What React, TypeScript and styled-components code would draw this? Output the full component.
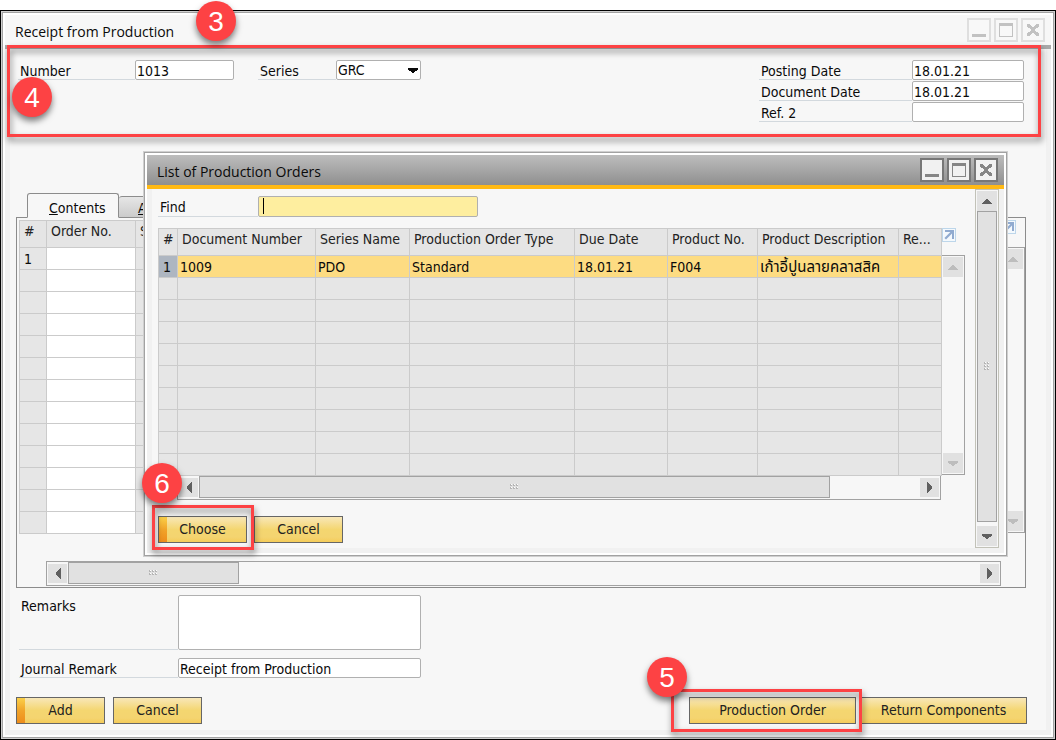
import React from "react";
import styled, { createGlobalStyle, css } from "styled-components";

const ui = `"DejaVu Sans Condensed", "Noto Sans", "Noto Sans Thai", sans-serif`;
const titleFont = `"Open Sans", "Noto Sans", sans-serif`;
const red = "#fd4244";

const GlobalStyle = createGlobalStyle`
  * { box-sizing: border-box; }
  body { margin: 0; background: #fff; font-family: ${ui}; font-size: 14px; line-height: 18px; color: #0a0a0a; }
  button, input, select, textarea { font: inherit; color: inherit; margin: 0; }
`;

/* ---------- windows ---------- */

const Screen = styled.div`
  position: relative;
  display: flex;
  flex-direction: column;
  min-height: 100vh;
  padding-top: 10px;
`;

const frame = css`
  display: flex;
  flex-direction: column;
  border: 1px solid #cfcfcf;
  box-shadow: inset 0 0 0 1px #a2a2a2;
  padding: 3px;
  background: #fff;
`;

const Edge = styled.div`
  flex: 1;
  display: flex;
  border: 1px solid #000;
`;

const MainWindow = styled.main`
  ${frame}
  flex: 1;
  min-width: 0;
`;

const Dialog = styled.section`
  ${frame}
  position: absolute;
  z-index: 2;
  top: 151px;
  left: 143px;
  right: 48px;
`;

const TitleBar = styled.header<{ $active?: boolean }>`
  position: relative;
  display: flex;
  align-items: center;
  justify-content: space-between;
  height: 34px;
  padding: 0 6px 0 10px;
  border-bottom: 4px solid ${(p) => (p.$active ? "#ffb914" : "#a9a9a9")};
  background: ${(p) => (p.$active ? "linear-gradient(#bdbdbd, #8f8f8f)" : "#f7f7f7")};
`;

const Title = styled.h1`
  margin: 0;
  padding-top: 4px;
  font: 400 14px/20px ${titleFont};
`;

const WindowButtons = styled.div`
  display: flex;
  gap: 3px;
`;

const WindowButton = styled.button<{ $active?: boolean }>`
  width: 24px;
  height: 24px;
  padding: 0;
  border: 2px solid ${(p) => (p.$active ? "#777" : "#dfdfdf")};
  background: ${(p) => (p.$active ? "#f1f1f1" : "#f8f8f8")};
  color: ${(p) => (p.$active ? "#858585" : "#c2c2c2")};
  svg { display: block; }
`;

const Body = styled.div`
  flex: 1;
  display: flex;
  flex-direction: column;
  border: solid #f1f1f1;
  border-width: 0 5px 5px;
  background: #f7f7f7;
`;

/* ---------- fields ---------- */

const HeaderSection = styled.section`
  position: relative;
  display: flex;
  align-items: flex-start;
  padding: 11px 22px 13px 8px;
`;

const Field = styled.div`
  display: flex;
  align-items: stretch;
`;

const SeriesField = styled(Field)`
  margin-left: 24px;
`;

const FieldStack = styled.div<{ $gap: number }>`
  display: flex;
  flex-direction: column;
  gap: ${(p) => p.$gap}px;
`;

const DateStack = styled(FieldStack)`
  margin-left: auto;
`;

const FieldLabel = styled.label<{ $width: number }>`
  width: ${(p) => p.$width}px;
  padding: 3px 0 0 2px;
  border-bottom: 1px solid #d3d9de;
  line-height: 16px;
`;

const box = css`
  display: block;
  padding: 2px 1px 0;
  border: 1px solid #b0b0b0;
  border-radius: 2px;
  background: #fff;
  outline: none;
`;

const TextInput = styled.input<{ $width: number }>`
  ${box}
  width: ${(p) => p.$width}px;
  height: 20px;
`;

const FindInput = styled(TextInput)`
  height: 21px;
  background: #feee9f;
`;

const TextArea = styled.textarea`
  ${box}
  width: 243px;
  height: 55px;
  resize: none;
`;

const SelectWrap = styled.div`
  position: relative;
  svg { position: absolute; right: 2px; top: 8px; pointer-events: none; }
`;

const Select = styled.select`
  ${box}
  width: 85px;
  height: 20px;
  padding-top: 0;
  appearance: none;
`;

const FindWrap = styled.div`
  position: relative;
`;

const Caret = styled.span`
  position: absolute;
  left: 5px;
  top: 2px;
  width: 1px;
  height: 16px;
  background: #000;
`;

/* ---------- buttons ---------- */

const PushButton = styled.button<{ $primary?: boolean; $wide?: boolean }>`
  width: ${(p) => (p.$wide ? 167 : 89)}px;
  height: 27px;
  padding: 0 0 2px;
  border: 1px solid #666;
  color: #222;
  background: ${(p) => (p.$primary ? "linear-gradient(#fbd048, #f1a42a 50%, #ee8d1c) 0 0 / 8px 100% no-repeat, " : "")}
    linear-gradient(#f8e7b8, #f4d670 50%, #f4d470 80%, #f5cc5a);
`;

const ButtonRow = styled.div<{ $gap: number }>`
  display: flex;
  gap: ${(p) => p.$gap}px;
`;

const Marked = styled.div`
  position: relative;
  display: flex;
`;

/* ---------- step markers ---------- */

const Outline = styled.div<{ $inset: string }>`
  position: absolute;
  inset: ${(p) => p.$inset};
  z-index: 2;
  border: 3px solid ${red};
  filter: drop-shadow(1px 4px 3px rgba(0, 0, 0, 0.5));
  pointer-events: none;
`;

const Badge = styled.span<{ $left: number; $top: number }>`
  position: absolute;
  left: ${(p) => p.$left}px;
  top: ${(p) => p.$top}px;
  z-index: 3;
  width: 40px;
  height: 40px;
  border-radius: 50%;
  background: ${red};
  box-shadow: 0 4px 6px rgba(0, 0, 0, 0.5);
  color: #fff;
  font: 400 28px/42px "Liberation Sans", Arial, sans-serif;
  text-align: center;
`;

/* ---------- tabs and grids ---------- */

const Tabs = styled.div`
  display: flex;
  align-items: flex-end;
  margin: 58px 0 -1px 17px;
  z-index: 1;
`;

const Tab = styled.button<{ $active?: boolean }>`
  width: 92px;
  height: ${(p) => (p.$active ? 25 : 22)}px;
  padding: ${(p) => (p.$active ? "5px 0 0 21px" : "2px 0 0 19px")};
  border: 1px solid #8c8c8c;
  border-bottom-color: ${(p) => (p.$active ? "#f7f7f7" : "#8c8c8c")};
  border-left-width: ${(p) => (p.$active ? 1 : 0)}px;
  border-radius: 3px 3px 0 0;
  background: ${(p) => (p.$active ? "#f7f7f7" : "linear-gradient(#e6e6e6, #cbcbcb)")};
  line-height: 16px;
  text-align: left;
`;

const TabPanel = styled.div`
  margin: 0 20px 0 6px;
  padding: 2px 0 1px 2px;
  border: 1px solid #8c8c8c;
`;

const GridArea = styled.div`
  display: grid;
  grid-template-columns: 1fr 23px;
`;

const Table = styled.table`
  width: 100%;
  table-layout: fixed;
  border-collapse: separate;
  border-spacing: 0;
  border: solid #cbcbcb;
  border-width: 1px 0 0 1px;
`;

const Th = styled.th<{ $width?: number }>`
  width: ${(p) => (p.$width ? `${p.$width}px` : "auto")};
  height: 27px;
  padding: 0 0 6px 4px;
  border: solid #cbcbcb;
  border-width: 0 1px 1px 0;
  background: #e5e5e5;
  color: #222;
  font-weight: 400;
  text-align: left;
  white-space: nowrap;
  overflow: hidden;
`;

const Td = styled.td<{ $tone?: "white" | "selected" | "marker" }>`
  height: 22px;
  padding: 1px 0 0 ${(p) => (p.$tone === "selected" ? 2 : 4)}px;
  border: solid #cbcbcb;
  border-width: 0 1px 1px 0;
  background: ${(p) =>
    p.$tone === "white" ? "#fff" : p.$tone === "selected" ? "#fddc82" : p.$tone === "marker" ? "#aeb6c1" : "#e6e6e6"};
  white-space: nowrap;
  overflow: hidden;
  &:lang(th) { font-size: 15px; }
`;

const GridSide = styled.div`
  display: flex;
  flex-direction: column;
`;

const ExpandLink = styled.button`
  display: flex;
  align-items: flex-start;
  height: 27px;
  padding: 0;
  border: 0;
  background: none;
`;

const SideTrack = styled.div`
  flex: 1;
  display: flex;
  flex-direction: column;
  justify-content: space-between;
  margin-bottom: 1px;
  padding: 1px;
  border: solid #a2a2a2;
  border-width: 1px 1px 1px 0;
`;

const ArrowButton = styled.button<{ $size: number; $off?: boolean }>`
  display: grid;
  place-items: center;
  width: ${(p) => p.$size}px;
  height: ${(p) => p.$size}px;
  padding: 0;
  border: 0;
  background: #e1e1e1;
  color: ${(p) => (p.$off ? "#bdbdbd" : "#606060")};
`;

const HBar = styled.div<{ $indent: number; $above?: number }>`
  display: flex;
  margin: ${(p) => p.$above ?? 0}px 24px 0 ${(p) => p.$indent}px;
  border: 1px solid #a2a2a2;
  border-top-width: ${(p) => (p.$above ? 1 : 0)}px;
  padding: 0 1px;
  height: ${(p) => (p.$above ? 25 : 24)}px;
  > button { margin-top: 2px; }
`;

const HTrack = styled.div`
  flex: 1;
  margin-left: 1px;
`;

const Thumb = styled.div`
  display: grid;
  place-items: center;
  border: 1px solid #a2a2a2;
  background: #e1e1e1;
`;

const HThumb = styled(Thumb)<{ $share: number }>`
  width: ${(p) => p.$share}%;
  height: 22px;
`;

const VBar = styled.div`
  display: flex;
  flex-direction: column;
  width: 24px;
  padding: 1px;
  border: 1px solid #c2c2b8;
`;

const VThumb = styled(Thumb)`
  flex: 1;
  margin-bottom: 4px;
`;

/* ---------- page sections ---------- */

const RemarksForm = styled.div`
  padding: 7px 0 0 9px;
`;

const Footer = styled.footer`
  display: flex;
  justify-content: space-between;
  margin-top: auto;
  padding: 19px 19px 6px 6px;
`;

const DialogBody = styled(Body)`
  flex-direction: row;
`;

const DialogMain = styled.div`
  flex: 1;
  min-width: 0;
  padding: 7px 10px 5px 6px;
`;

const FindRow = styled(Field)`
  margin-bottom: 11px;
`;

const DialogActions = styled(ButtonRow)`
  margin-top: 16px;
`;

/* ---------- drawings ---------- */

const arrows = {
  up: "M5 0h2v1h1v1h1v1h1v1h1v1H1V4h1V3h1V2h1V1h1z",
  down: "M1 0h10v2h-1v1H8v1H7v1H5V4H4V3H2V2H1z",
  left: "M5 0h1v11H5v-1H4V9H3V8H2V7H1V4h1V3h1V2h1V1h1z",
  right: "M0 0h1v1h1v1h1v1h1v1h1v3H4v1H3v1H2v1H1v1H0z",
};

function Arrow({ dir }: { dir: keyof typeof arrows }) {
  const flat = dir === "up" || dir === "down";
  return (
    <svg width={flat ? 12 : 6} height={flat ? 5 : 11} fill="currentColor" shapeRendering="crispEdges" aria-hidden="true">
      <path d={arrows[dir]} />
    </svg>
  );
}

function Grip({ cols, rows }: { cols: number; rows: number }) {
  const dots = [];
  for (let c = 0; c < cols; c++)
    for (let r = 0; r < rows; r++)
      dots.push(
        <g key={`${c}-${r}`}>
          <rect x={c * 3} y={r * 3} width="2" height="2" fill="#b5b5b5" />
          <rect x={c * 3 + 1} y={r * 3} width="1" height="1" fill="#fff" />
        </g>
      );
  return (
    <svg width={cols * 3} height={rows * 3} shapeRendering="crispEdges" aria-hidden="true">
      {dots}
    </svg>
  );
}

function ExpandIcon() {
  return (
    <svg width="14" height="14" aria-hidden="true">
      <rect x="0.5" y="0.5" width="13" height="13" fill="#f4f9fd" stroke="#bdd6ea" />
      <path d="M3 2h9v9h-2V5.6L4 11.6 2.4 10 8.4 4H3z" fill="#91abd0" />
    </svg>
  );
}

function WindowControls({ active }: { active?: boolean }) {
  return (
    <WindowButtons>
      <WindowButton $active={active} aria-label="Minimize">
        <svg width="20" height="20"><path d="M3 14h14v3H3z" fill="currentColor" /></svg>
      </WindowButton>
      <WindowButton $active={active} aria-label="Maximize">
        <svg width="20" height="20"><path d="M3 3h14v14H3zM4 6v10h12V6z" fillRule="evenodd" fill="currentColor" /></svg>
      </WindowButton>
      <WindowButton $active={active} aria-label="Close">
        <svg width="20" height="20" shapeRendering="crispEdges">
          <path d="M4 4h3v1h1v1h1v1h2V6h1V5h1V4h3v3h-1v1h-2v1h-1v2h1v1h2v1h1v3h-3v-1h-1v-1h-1v-1H9v1H8v1H7v1H4v-3h1v-1h2v-1h1V9H7V8H5V7H4z" fill="currentColor" />
        </svg>
      </WindowButton>
    </WindowButtons>
  );
}

function GridSideBar() {
  return (
    <GridSide>
      <ExpandLink aria-label="Expand grid"><ExpandIcon /></ExpandLink>
      <SideTrack>
        <ArrowButton $size={20} $off aria-label="Scroll up"><Arrow dir="up" /></ArrowButton>
        <ArrowButton $size={20} $off aria-label="Scroll down"><Arrow dir="down" /></ArrowButton>
      </SideTrack>
    </GridSide>
  );
}

function HScroll({ indent, above, share }: { indent: number; above?: number; share: number }) {
  return (
    <HBar $indent={indent} $above={above}>
      <ArrowButton $size={19} aria-label="Scroll left"><Arrow dir="left" /></ArrowButton>
      <HTrack>
        <HThumb $share={share}><Grip cols={3} rows={2} /></HThumb>
      </HTrack>
      <ArrowButton $size={19} aria-label="Scroll right"><Arrow dir="right" /></ArrowButton>
    </HBar>
  );
}

/* ---------- data ---------- */

const orderColumns: { name: string; width?: number; value: string; lang?: string }[] = [
  { name: "Document Number", width: 138, value: "1009" },
  { name: "Series Name", width: 94, value: "PDO" },
  { name: "Production Order Type", width: 165, value: "Standard" },
  { name: "Due Date", width: 93, value: "18.01.21" },
  { name: "Product No.", width: 90, value: "F004" },
  { name: "Product Description", value: "เก้าอี้ปูนลายคลาสสิค", lang: "th" },
  { name: "Re...", width: 43, value: "" },
];

const range = (n: number) => Array.from({ length: n }, (_, i) => i);

function OrdersDialog() {
  return (
    <Dialog role="dialog" aria-labelledby="orders-title">
      <TitleBar $active>
        <Title as="h2" id="orders-title">List of Production Orders</Title>
        <WindowControls active />
      </TitleBar>
      <DialogBody>
        <DialogMain>
          <FindRow>
            <FieldLabel $width={100} htmlFor="find">Find</FieldLabel>
            <FindWrap>
              <FindInput $width={220} id="find" />
              <Caret />
            </FindWrap>
          </FindRow>
          <GridArea>
            <Table>
              <thead>
                <tr>
                  <Th $width={19}>#</Th>
                  {orderColumns.map((c) => <Th key={c.name} $width={c.width}>{c.name}</Th>)}
                </tr>
              </thead>
              <tbody>
                <tr>
                  <Td $tone="marker">1</Td>
                  {orderColumns.map((c) => <Td key={c.name} $tone="selected" lang={c.lang}>{c.value}</Td>)}
                </tr>
                {range(9).map((r) => (
                  <tr key={r}>{range(8).map((c) => <Td key={c} />)}</tr>
                ))}
              </tbody>
            </Table>
            <GridSideBar />
          </GridArea>
          <HScroll indent={19} share={87.5} />
          <DialogActions $gap={7}>
            <Marked>
              <PushButton $primary>Choose</PushButton>
              <Outline $inset="-11px -7px -7px -6px" />
              <Badge $left={-16} $top={-53}>6</Badge>
            </Marked>
            <PushButton>Cancel</PushButton>
          </DialogActions>
        </DialogMain>
        <VBar>
          <ArrowButton $size={20} aria-label="Scroll up"><Arrow dir="up" /></ArrowButton>
          <VThumb><Grip cols={2} rows={3} /></VThumb>
          <ArrowButton $size={20} aria-label="Scroll down"><Arrow dir="down" /></ArrowButton>
        </VBar>
      </DialogBody>
    </Dialog>
  );
}

export default function App() {
  return (
    <Screen>
      <GlobalStyle />
      <Edge>
        <MainWindow>
          <TitleBar>
            <Title>Receipt from Production</Title>
            <Badge $left={191} $top={-14}>3</Badge>
            <WindowControls />
          </TitleBar>
          <Body>
            <HeaderSection>
              <Field>
                <FieldLabel $width={117} htmlFor="number">Number</FieldLabel>
                <TextInput $width={99} id="number" defaultValue="1013" />
              </Field>
              <SeriesField>
                <FieldLabel $width={78} htmlFor="series">Series</FieldLabel>
                <SelectWrap>
                  <Select id="series" defaultValue="GRC"><option>GRC</option></Select>
                  <Arrow dir="down" />
                </SelectWrap>
              </SeriesField>
              <DateStack $gap={1}>
                <Field>
                  <FieldLabel $width={153} htmlFor="posting">Posting Date</FieldLabel>
                  <TextInput $width={112} id="posting" defaultValue="18.01.21" />
                </Field>
                <Field>
                  <FieldLabel $width={153} htmlFor="document">Document Date</FieldLabel>
                  <TextInput $width={112} id="document" defaultValue="18.01.21" />
                </Field>
                <Field>
                  <FieldLabel $width={153} htmlFor="ref2">Ref. 2</FieldLabel>
                  <TextInput $width={112} id="ref2" />
                </Field>
              </DateStack>
              <Outline $inset="-4px 5px -2px -3px" />
              <Badge $left={2} $top={28}>4</Badge>
            </HeaderSection>

            <Tabs role="tablist">
              <Tab $active role="tab" aria-selected="true"><u>C</u>ontents</Tab>
              <Tab role="tab" aria-selected="false"><u>A</u></Tab>
            </Tabs>
            <TabPanel role="tabpanel">
              <GridArea>
                <Table>
                  <thead>
                    <tr>
                      <Th $width={27}>#</Th>
                      <Th $width={89}>Order No.</Th>
                      <Th>S</Th>
                    </tr>
                  </thead>
                  <tbody>
                    {range(13).map((r) => (
                      <tr key={r}>
                        <Td>{r === 0 ? "1" : ""}</Td>
                        <Td $tone="white" />
                        <Td />
                      </tr>
                    ))}
                  </tbody>
                </Table>
                <GridSideBar />
              </GridArea>
              <HScroll indent={27} above={27} share={18.75} />
            </TabPanel>

            <RemarksForm>
              <FieldStack $gap={8}>
                <Field>
                  <FieldLabel $width={159} htmlFor="remarks">Remarks</FieldLabel>
                  <TextArea id="remarks" />
                </Field>
                <Field>
                  <FieldLabel $width={159} htmlFor="journal">Journal Remark</FieldLabel>
                  <TextInput $width={243} id="journal" defaultValue="Receipt from Production" />
                </Field>
              </FieldStack>
            </RemarksForm>

            <Footer>
              <ButtonRow $gap={8}>
                <PushButton $primary>Add</PushButton>
                <PushButton>Cancel</PushButton>
              </ButtonRow>
              <ButtonRow $gap={4}>
                <Marked>
                  <PushButton $wide>Production Order</PushButton>
                  <Outline $inset="-8px -6px -8px -18px" />
                  <Badge $left={-42} $top={-40}>5</Badge>
                </Marked>
                <PushButton $wide>Return Components</PushButton>
              </ButtonRow>
            </Footer>
          </Body>
        </MainWindow>
      </Edge>
      <OrdersDialog />
    </Screen>
  );
}
